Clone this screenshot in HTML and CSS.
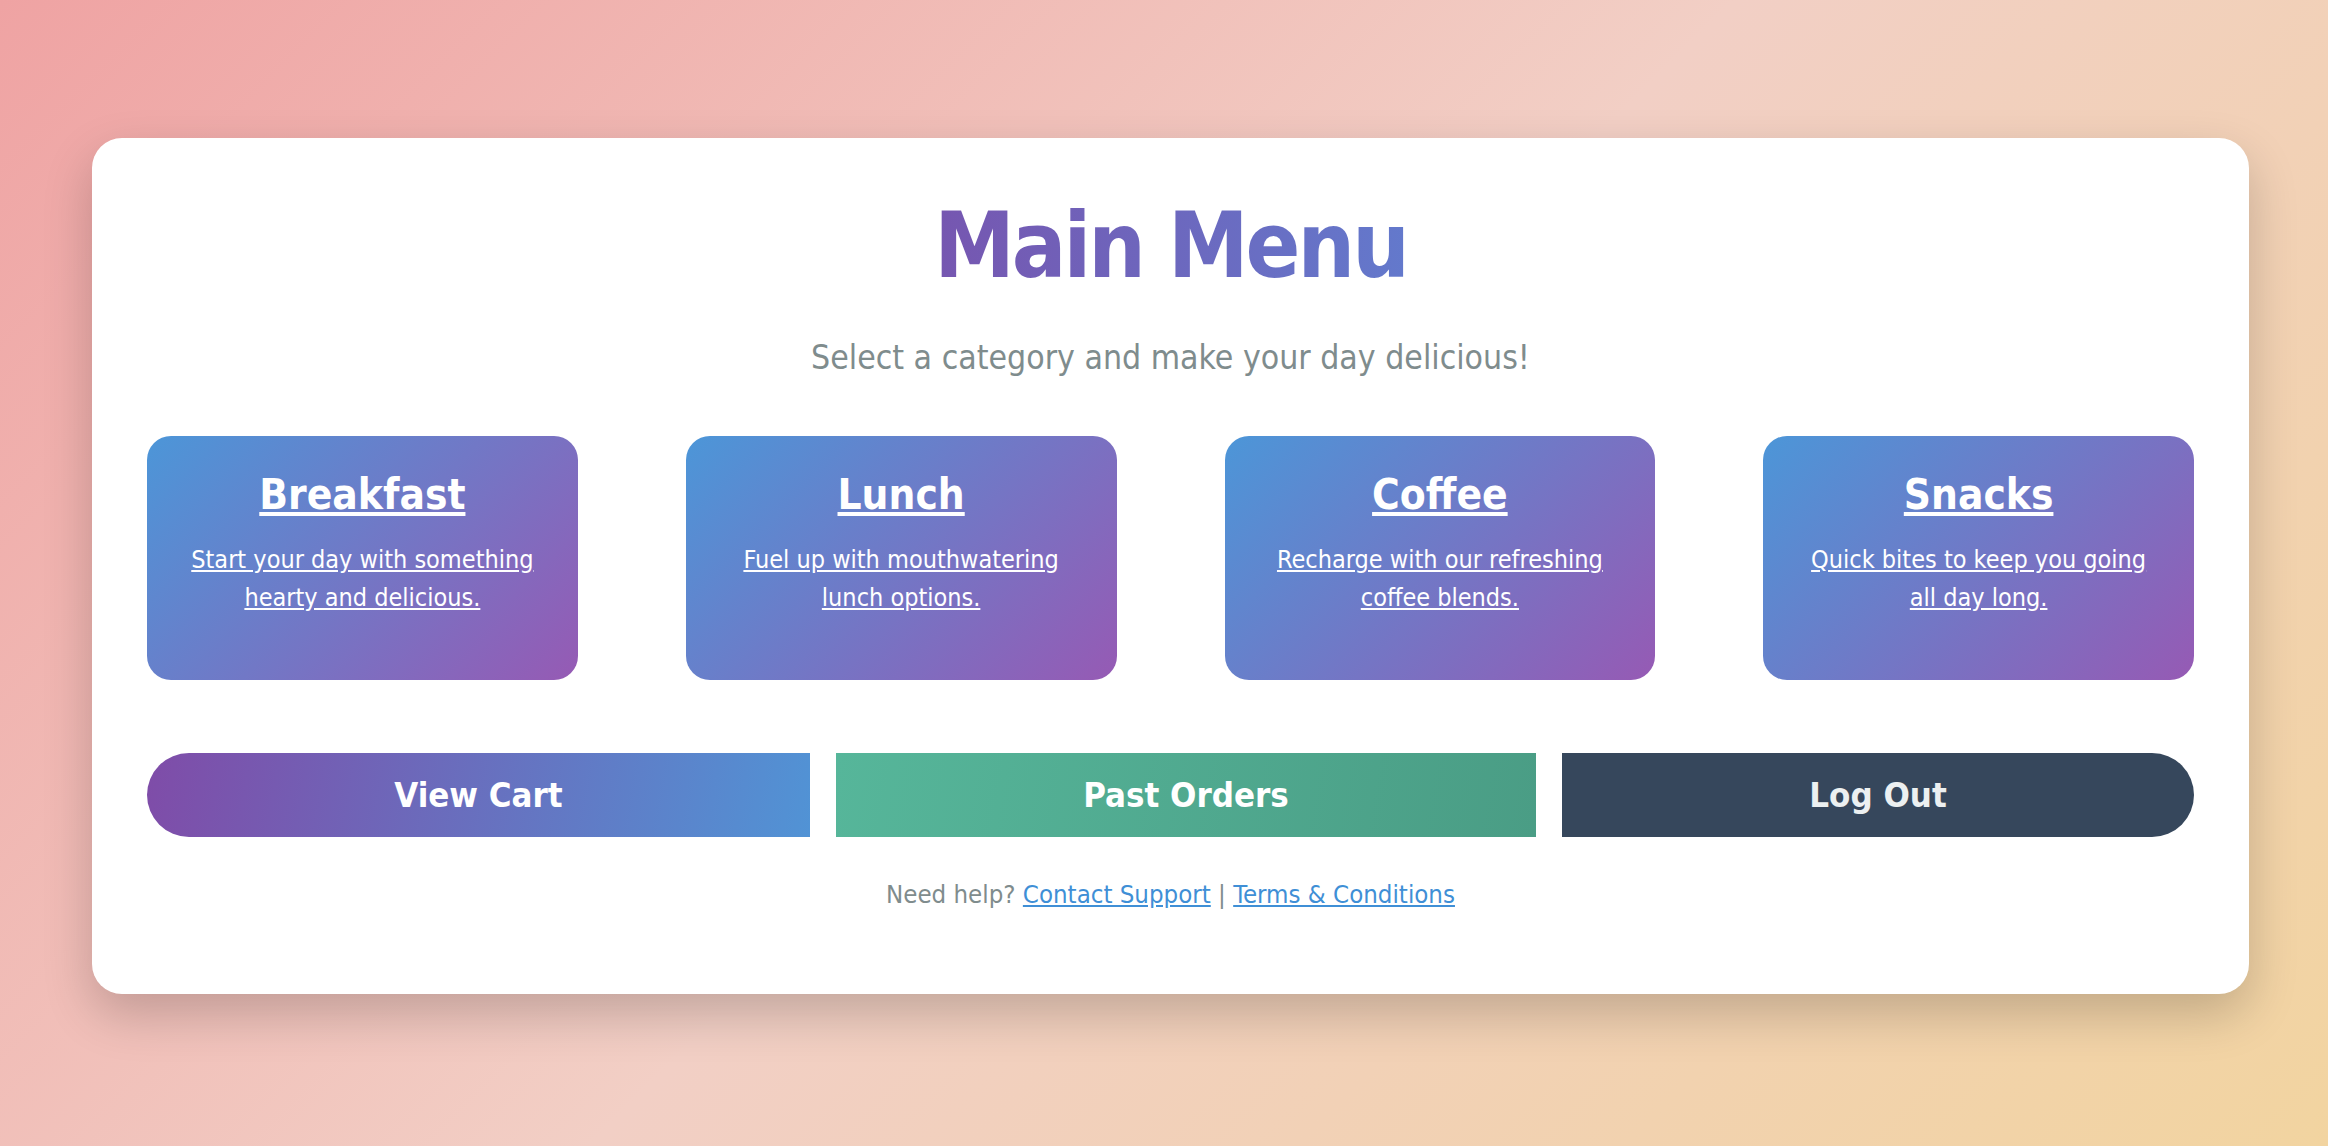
FILE: index.html
```html
<!DOCTYPE html>
<html lang="en">

<head>
    <meta charset="UTF-8">
    <meta name="viewport" content="width=device-width, initial-scale=1.0">
    <title>Main Menu</title>
    <link rel="stylesheet" href="styles.css">
</head>

<body>
    <div class="menu-box">
        <h1 class="menu-title">Main Menu</h1>
        <p class="menu-sub">Select a category and make your day delicious!</p>

        <div class="category-list">
            <a class="category" href="javascript:;">
                <h2>Breakfast</h2>
                <p>Start your day with something hearty and delicious.</p>
            </a>
            <a class="category" href="javascript:;">
                <h2>Lunch</h2>
                <p>Fuel up with mouthwatering lunch options.</p>
            </a>
            <a class="category" href="javascript:;">
                <h2>Coffee</h2>
                <p>Recharge with our refreshing coffee blends.</p>
            </a>
            <a class="category" href="javascript:;">
                <h2>Snacks</h2>
                <p>Quick bites to keep you going all day long.</p>
            </a>
        </div>

        <div class="actions">
            <a class="btn btn-cart" href="javascript:;">View Cart</a>
            <a class="btn btn-orders" href="javascript:;">Past Orders</a>
            <a class="btn btn-logout" href="javascript:;">Log Out</a>
        </div>

        <div class="footer">
            Need help? <a href="javascript:;">Contact Support</a> | <a href="javascript:;">Terms &amp; Conditions</a>
        </div>
    </div>
</body>

</html>
```

FILE: styles.css
```css
* {
    padding: 0;
    margin: 0;
    box-sizing: border-box;
}

html,
body {
    height: 100%;
}

body {
    display: flex;
    align-items: center;
    justify-content: center;
    padding: 0 0 14px 13px;
    font-family: "DejaVu Sans Condensed", "DejaVu Sans", sans-serif;
    font-stretch: condensed;
    background: linear-gradient(135deg, #efa3a3 0%, #f2cfc5 50%, #f2d4a0 100%);
}

.menu-box {
    width: 2157px;
    height: 856px;
    padding: 50px 55px 0;
    text-align: center;
    background-color: #fff;
    border-radius: 30px;
    box-shadow: 0 20px 50px rgba(0, 0, 0, .2);
}

/* 标题文字渐变 */
.menu-title {
    display: inline-block;
    font-size: 90px;
    line-height: 115px;
    letter-spacing: -3px;
    font-weight: 700;
    color: transparent;
    background: linear-gradient(90deg, #7656b0, #6379cc);
    -webkit-background-clip: text;
    background-clip: text;
}

.menu-sub {
    margin-top: 34px;
    font-size: 33.5px;
    line-height: 42px;
    color: #7f8c8d;
}

.category-list {
    display: grid;
    grid-template-columns: repeat(4, 1fr);
    gap: 108px;
    margin-top: 57px;
}

.category {
    height: 244px;
    padding: 34px 38px 0;
    color: #fff;
    border-radius: 24px;
    background: linear-gradient(135deg, #4c96d8, #965ab4);
}

.category h2 {
    font-size: 42px;
    line-height: 50px;
}

.category p {
    margin-top: 21px;
    font-size: 25px;
    line-height: 38px;
}

.actions {
    display: flex;
    gap: 26px;
    margin-top: 73px;
}

.btn {
    flex: 1 1 auto;
    padding: 21px 20px;
    font-size: 34.5px;
    line-height: 42px;
    font-weight: 700;
    color: #fff;
    text-decoration: none;
}

.btn-cart {
    border-radius: 50px 0 0 50px;
    background: linear-gradient(100deg, #7f4ca8, #5193d5);
}

.btn-orders {
    background: linear-gradient(100deg, #56b69a, #4a9d85);
}

.btn-logout {
    color: #ecf0f1;
    border-radius: 0 50px 50px 0;
    background-color: #36475c;
}

.footer {
    margin-top: 42px;
    font-size: 25.6px;
    line-height: 31px;
    color: #7f8c8d;
}

.footer a {
    color: #3f8fd6;
}
```
